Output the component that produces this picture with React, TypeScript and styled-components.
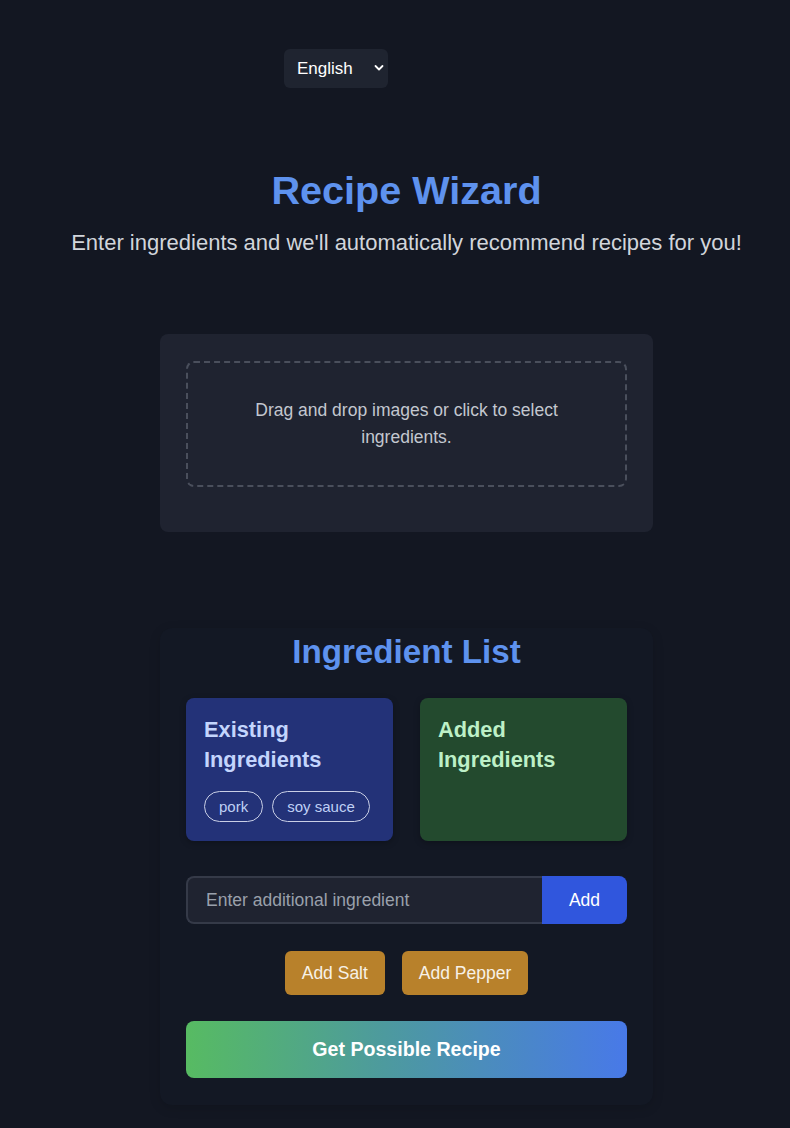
import React from "react";
import styled, { createGlobalStyle } from "styled-components";

const Global = createGlobalStyle`
  html, body { margin: 0; padding: 0; background: #131722; }
  body { font-family: "Liberation Sans", Arial, sans-serif; color: #e5e7eb; }
  * { box-sizing: border-box; }
`;

const Page = styled.main`
  min-height: 1128px;
  padding: 49px 0 0 23px;
  display: flex;
  flex-direction: column;
  align-items: center;
`;

const LangRow = styled.div`
  align-self: flex-start;
  margin-left: 261px;
  position: relative;
  width: 104px;
  height: 39px;
`;

const LangSelect = styled.select`
  appearance: none;
  width: 100%;
  height: 100%;
  background: #1f2430;
  color: #ffffff;
  border: none;
  border-radius: 6px;
  font-family: "Liberation Sans", Arial, sans-serif;
  font-size: 17px;
  padding: 0 0 0 13px;
  outline: none;
`;

const Chevron = styled.svg`
  position: absolute;
  right: 4px;
  top: 15px;
  pointer-events: none;
`;

const Title = styled.h1`
  margin: 78px 0 0;
  font-size: 39.6px;
  line-height: 48px;
  font-weight: 700;
  color: #5e92ee;
  text-align: center;
`;

const Subtitle = styled.p`
  margin: 15px 0 0;
  font-size: 22px;
  line-height: 28px;
  color: #d1d5db;
  text-align: center;
  white-space: nowrap;
`;

const UploadCard = styled.section`
  margin-top: 77px;
  width: 493px;
  background: #1f2330;
  border-radius: 8px;
  padding: 27px 26px 45px;
`;

const DropZone = styled.div`
  border: 2px dashed #4a4f5c;
  border-radius: 8px;
  height: 126px;
  padding: 0 50px;
  display: flex;
  align-items: center;
  justify-content: center;
  text-align: center;
  font-size: 17.5px;
  line-height: 27px;
  color: #c3c7cf;
`;

const IngredientCard = styled.section`
  margin-top: 96px;
  width: 493px;
  background: #131824;
  border-radius: 12px;
  box-shadow: 0 3px 12px rgba(0, 0, 0, 0.14);
  padding: 5px 26px 27px;
  display: flex;
  flex-direction: column;
`;

const SectionTitle = styled.h2`
  margin: 0;
  font-size: 33.2px;
  line-height: 38px;
  font-weight: 700;
  color: #5e92ee;
  text-align: center;
`;

const Boxes = styled.div`
  margin-top: 27px;
  display: grid;
  grid-template-columns: 1fr 1fr;
  gap: 27px;
  min-height: 143px;
`;

const Box = styled.div<{ $tone: "blue" | "green" }>`
  background: ${(p) => (p.$tone === "blue" ? "#233278" : "#234a2e")};
  border-radius: 8px;
  padding: 17px 18px 19px;
  box-shadow: 0 2px 6px rgba(0, 0, 0, 0.25);
`;

const BoxTitle = styled.h3<{ $tone: "blue" | "green" }>`
  margin: 0;
  font-size: 21.8px;
  line-height: 30px;
  font-weight: 700;
  color: ${(p) => (p.$tone === "blue" ? "#c3d5fd" : "#bdf0c7")};
`;

const Tags = styled.div`
  margin-top: 16px;
  display: flex;
  flex-wrap: wrap;
  gap: 9px;
`;

const Tag = styled.span`
  height: 31px;
  padding: 0 14px;
  border: 1px solid #c9cfe6;
  border-radius: 16px;
  font-size: 15px;
  color: #bfd0f5;
  display: inline-flex;
  align-items: center;
`;

const InputRow = styled.div`
  margin-top: 35px;
  display: flex;
  height: 48px;
`;

const Input = styled.input`
  flex: 1;
  min-width: 0;
  background: #1f2330;
  border: 2px solid #353a48;
  border-right: none;
  border-radius: 8px 0 0 8px;
  padding: 0 18px;
  font-family: "Liberation Sans", Arial, sans-serif;
  font-size: 17.5px;
  color: #e5e7eb;
  outline: none;
  &::placeholder { color: #9aa0ab; }
`;

const AddButton = styled.button`
  width: 85px;
  background: #3056dd;
  color: #ffffff;
  border: none;
  border-radius: 0 8px 8px 0;
  font-family: "Liberation Sans", Arial, sans-serif;
  font-size: 17.5px;
`;

const SpiceRow = styled.div`
  margin-top: 27px;
  display: flex;
  justify-content: center;
  gap: 17px;
`;

const SpiceButton = styled.button`
  height: 44px;
  padding: 0 17px;
  background: #b8812b;
  color: #f7f1e7;
  border: none;
  border-radius: 6px;
  font-family: "Liberation Sans", Arial, sans-serif;
  font-size: 17.5px;
`;

const RecipeButton = styled.button`
  margin-top: 26px;
  height: 57px;
  width: 100%;
  border: none;
  border-radius: 8px;
  background: linear-gradient(90deg, #57bb62 0%, #4d9a9e 45%, #4879e8 100%);
  color: #ffffff;
  font-family: "Liberation Sans", Arial, sans-serif;
  font-size: 19.6px;
  font-weight: 700;
`;

export default function App() {
  return (
    <>
      <Global />
      <Page>
        <LangRow>
          <LangSelect defaultValue="en">
            <option value="en">English</option>
            <option value="ko">한국어</option>
          </LangSelect>
          <Chevron width="10" height="8" viewBox="0 0 10 8">
            <path d="M1.5 2 L5 5.5 L8.5 2" fill="none" stroke="#ffffff" strokeWidth="1.8" strokeLinecap="round" strokeLinejoin="round" />
          </Chevron>
        </LangRow>
        <Title>Recipe Wizard</Title>
        <Subtitle>Enter ingredients and we'll automatically recommend recipes for you!</Subtitle>
        <UploadCard>
          <DropZone>Drag and drop images or click to select ingredients.</DropZone>
        </UploadCard>
        <IngredientCard>
          <SectionTitle>Ingredient List</SectionTitle>
          <Boxes>
            <Box $tone="blue">
              <BoxTitle $tone="blue">Existing Ingredients</BoxTitle>
              <Tags>
                <Tag>pork</Tag>
                <Tag>soy sauce</Tag>
              </Tags>
            </Box>
            <Box $tone="green">
              <BoxTitle $tone="green">Added Ingredients</BoxTitle>
            </Box>
          </Boxes>
          <InputRow>
            <Input placeholder="Enter additional ingredient" />
            <AddButton>Add</AddButton>
          </InputRow>
          <SpiceRow>
            <SpiceButton>Add Salt</SpiceButton>
            <SpiceButton>Add Pepper</SpiceButton>
          </SpiceRow>
          <RecipeButton>Get Possible Recipe</RecipeButton>
        </IngredientCard>
      </Page>
    </>
  );
}
